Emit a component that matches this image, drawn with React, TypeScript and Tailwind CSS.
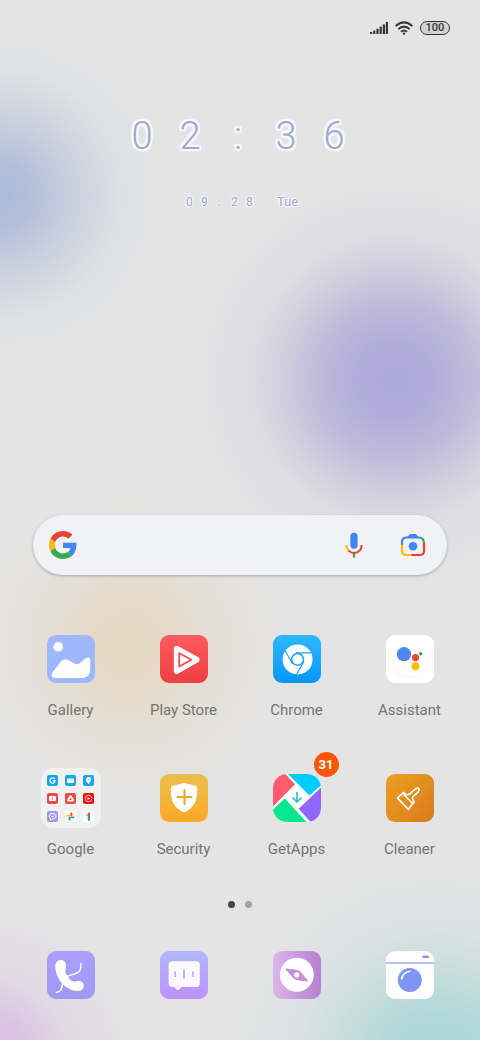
import type { ReactNode } from "react";
import clsx from "clsx";

type AppItem = {
  name: string;
  icon: ReactNode;
  badge?: number;
};

const Tile = ({ className, children }: { className: string; children: ReactNode }) => (
  <span className={clsx("block size-12 overflow-hidden rounded-[9px]", className)}>
    <svg viewBox="0 0 48 48" className="size-full" aria-hidden="true">
      {children}
    </svg>
  </span>
);

const GalleryIcon = () => (
  <Tile className="bg-[#9fb8fd]">
    <circle cx="11.2" cy="11.8" r="4.8" fill="#fff" />
    <path
      d="M5.5 37.500L13.500 27Q17 23 21 25L27.500 28.600Q30 30 32.500 28.200L38.500 23.500Q43.300 20.500 43.300 26V34Q43.300 43 34 43H8Q2.800 42.500 5.500 37.500Z"
      fill="#fff"
    />
  </Tile>
);

const PlayIcon = () => (
  <Tile className="bg-linear-to-b from-[#fd5b5e] to-[#ee3f43]">
    <path d="M16.800 14L36.500 24.700L16.800 36Z" fill="#fff" stroke="#fff" strokeWidth="6" strokeLinejoin="round" />
    <path d="M19.200 18.200L31.500 24.800L19.200 31.500Z" fill="#fff" stroke="#f34a4e" strokeWidth="1.8" strokeLinejoin="round" />
  </Tile>
);

const ChromeIcon = () => (
  <Tile className="bg-linear-to-b from-[#2cb8fd] to-[#0496fb]">
    <circle cx="24.600" cy="24.400" r="15" fill="#fff" />
    <g fill="none" stroke="#189ffb" strokeWidth="1.200">
      <circle cx="24.600" cy="24.400" r="5.900" strokeWidth="1.500" />
      <path d="M23 17.900H38" />
      <path d="M23 17.900H38" transform="rotate(120 24.600 24.400)" />
      <path d="M23 17.900H38" transform="rotate(240 24.600 24.400)" />
    </g>
  </Tile>
);

const AssistantIcon = () => (
  <Tile className="bg-white">
    <path d="M6 28A18.500 18.500 0 0 0 42 28" fill="none" stroke="#f3f3f3" strokeWidth="1" />
    <circle cx="18" cy="19.200" r="7.100" fill="#4c86f0" />
    <circle cx="29.500" cy="22.600" r="3.600" fill="#ea4639" />
    <circle cx="29.500" cy="31.200" r="4" fill="#fbbb08" />
    <circle cx="34.700" cy="18.700" r="1.800" fill="#36a754" />
  </Tile>
);

const SecurityIcon = () => (
  <Tile className="bg-linear-to-b from-[#e9bf4e] to-[#fda823]">
    <path
      d="M24 9C27 9.200 31 11 35.500 11.800Q37.300 12.300 37.300 14.500C37.600 26 34.500 33 26 37.500Q24 38.500 22 37.500C13.500 33 10.600 26 10.900 14.500Q10.900 12.300 12.700 11.800C17 11 21 9.200 24 9Z"
      fill="#fff"
    />
    <path d="M24.500 16V30M17.500 23H31.500" stroke="#eda92f" strokeWidth="2.200" strokeLinecap="round" />
  </Tile>
);

const GetAppsIcon = () => (
  <span className="block size-12 overflow-hidden rounded-[14px] bg-white">
    <svg viewBox="0 0 48 48" className="size-full" aria-hidden="true">
      <path d="M0 0H12.300L22 10.300L0 32.500Z" fill="#fe5c6c" />
      <path d="M15 0H48V11.500L36.300 21.500Z" fill="#00cbfd" />
      <path d="M48 13.500V48H37.500L25.700 34.800Z" fill="#9166fe" />
      <path d="M0 35.500L11.800 24.500L33.500 48H0Z" fill="#06e68c" />
      <path d="M24 18V27.500" stroke="#1cb6c9" strokeWidth="1.500" />
      <path d="M19.500 23.500L24 28L28.500 23.500" fill="none" stroke="#16c4b4" strokeWidth="1.500" />
    </svg>
  </span>
);

const CleanerIcon = () => (
  <Tile className="bg-linear-to-br from-[#eca022] to-[#d97b1c]">
    <g fill="none" stroke="#fff" strokeWidth="1.700" strokeLinejoin="round" strokeLinecap="round">
      <path d="M11.500 24.200L17.300 18.500L20 20.500Q22 21.300 24 19.700L29.800 14.700Q32 13.600 33 15Q33.700 16.300 32.300 17.800L27 22.600Q25.800 24.300 27.300 26.500L28 28L22.300 35.300Z" />
      <path d="M16.700 19.500L26.700 29.500" />
    </g>
  </Tile>
);

const PhoneIcon = () => (
  <Tile className="bg-linear-to-b from-[#aaa0fb] to-[#a296f9]">
    <path
      d="M8.300 16C8 11.500 11 8.500 14.500 9C18.500 9.700 19.700 13.500 18.700 17C17.700 20 18.300 22.500 20.500 25.500C23 29 25.500 31.300 28.500 30.500C33 29 36.800 31.300 36.800 34.700C36.800 38.500 33 40.500 29 40C17 38.300 8.800 27 8.300 16Z"
      fill="#fff"
    />
    <path d="M34 12.500C34.500 24 28 22 20 25.500" fill="none" stroke="#fff" strokeWidth="1.400" strokeLinecap="round" />
    <path d="M15.500 30C15.800 36 14 41 9.300 41.500" fill="none" stroke="#fff" strokeWidth="1.400" strokeLinecap="round" />
  </Tile>
);

const MessagesIcon = () => (
  <Tile className="bg-linear-to-b from-[#b0b8fb] to-[#bc90fb]">
    <path
      d="M12.500 10.300H36Q39.800 10.300 39.800 14V32.300Q39.800 36 36 36H21.500L18.800 38.600Q17.700 39.600 16.600 38.600L14.500 36H12.500Q8.600 36 8.600 32.300V14Q8.600 10.300 12.500 10.300Z"
      fill="#fbf8ff"
    />
    <g strokeWidth="1.500">
      <path d="M15.200 20.500V26M33 20.500V26" stroke="#b7a4f8" />
      <path d="M24 18.200V28" stroke="#b9a0f8" />
    </g>
  </Tile>
);

const BrowserIcon = () => (
  <Tile className="bg-linear-to-r from-[#dcb5ea] to-[#b680d0]">
    <circle cx="23.800" cy="23.800" r="17" fill="#fff" />
    <path d="M12.700 18Q20 18.200 26.500 20.200L34.800 30Q27 29.800 21.200 27.600Z" fill="#c391db" stroke="#c391db" strokeLinejoin="round" />
    <circle cx="23.800" cy="23.900" r="2.600" fill="#fff" />
  </Tile>
);

const CameraIcon = () => (
  <Tile className="bg-white">
    <path d="M0 12H48" stroke="#a0aafc" strokeWidth="1.500" />
    <ellipse cx="39.700" cy="5.700" rx="3.700" ry="1.300" fill="#7f92f4" />
    <circle cx="23.800" cy="29" r="12" fill="#7f95f6" />
    <path d="M15.500 28Q17 21.500 24 20.300" fill="none" stroke="#fff" strokeWidth="1.500" strokeLinecap="round" />
  </Tile>
);

const Mini = ({ className, children }: { className: string; children: ReactNode }) => (
  <svg viewBox="0 0 11 11" className={clsx("size-[11px] rounded-[2px]", className)} aria-hidden="true">
    {children}
  </svg>
);

const FolderIcon = () => (
  <span className="grid size-[60px] grid-cols-3 place-content-center justify-items-center gap-[7px] rounded-[12px] bg-[#f1f1f0] px-[6px]">
    <Mini className="bg-[#18a5f4]">
      <path d="M7.500 3.800A2.600 2.600 0 1 0 8.100 5.700H5.800" fill="none" stroke="#fff" strokeWidth="1.200" />
    </Mini>
    <Mini className="bg-[#18a5f4]">
      <path d="M2 3.500H9V7Q9 8 8 8H3Q2 8 2 7Z" fill="#fff" />
      <path d="M2 3.700L5.500 5.400L9 3.700" fill="none" stroke="#8fd3fa" strokeWidth="0.600" />
    </Mini>
    <Mini className="bg-[#18a5f4]">
      <path d="M5.500 9.200Q2.900 6 2.900 4.500A2.600 2.600 0 0 1 8.100 4.500Q8.100 6 5.500 9.200Z" fill="#fff" />
      <circle cx="5.500" cy="4.500" r="0.800" fill="#7cc9f7" />
    </Mini>
    <Mini className="bg-[#f2484c]">
      <rect x="2" y="3" width="7" height="5" rx="1.300" fill="#fff" />
      <path d="M4.800 4.300L6.700 5.500L4.800 6.700Z" fill="#f2484c" />
    </Mini>
    <Mini className="bg-[#f2484c]">
      <path d="M4.600 2.500H6.400L9 7L8.200 8.500H2.800L2 7Z" fill="#fff" />
      <path d="M5.500 4.700L6.800 6.900H4.200Z" fill="#f2484c" />
    </Mini>
    <Mini className="bg-[#ee0d12]">
      <circle cx="5.500" cy="5.500" r="3.300" fill="none" stroke="#fff" strokeWidth="0.700" />
      <path d="M4.500 3.900L7.200 5.500L4.500 7.100Z" fill="#fff" />
    </Mini>
    <Mini className="bg-[#a596f4]">
      <path d="M5.500 2.500C8 2.500 8.800 3.800 8.800 5.300S8 8 5.500 8L3.500 9V7.500Q2.200 6.800 2.200 5.300C2.200 3.800 3 2.500 5.500 2.500Z" fill="none" stroke="#fff" />
      <path d="M4.200 5.300H6.800" stroke="#fff" />
    </Mini>
    <Mini className="bg-white">
      <path d="M5.500 5.500V1.300A2.100 2.100 0 0 1 5.500 5.500" fill="#ea4335" />
      <path d="M5.500 5.500H9.700A2.100 2.100 0 0 1 5.500 5.500" fill="#4285f4" />
      <path d="M5.500 5.500V9.700A2.100 2.100 0 0 1 5.500 5.500" fill="#34a853" />
      <path d="M5.500 5.500H1.300A2.100 2.100 0 0 1 5.500 5.500" fill="#fbbc04" />
    </Mini>
    <Mini className="bg-white">
      <path d="M3 3.800L5 2.200V4.600L3 5.500Z" fill="#fbbc04" />
      <path d="M4.800 2.300L7 1.300V4H4.800Z" fill="#ea4335" />
      <path d="M4.800 3.600H7V7.500H4.800Z" fill="#4285f4" />
      <path d="M4.800 7.300H7V9.700H4.800Z" fill="#34a853" />
    </Mini>
  </span>
);

const apps: AppItem[] = [
  { name: "Gallery", icon: <GalleryIcon /> },
  { name: "Play Store", icon: <PlayIcon /> },
  { name: "Chrome", icon: <ChromeIcon /> },
  { name: "Assistant", icon: <AssistantIcon /> },
  { name: "Google", icon: <FolderIcon /> },
  { name: "Security", icon: <SecurityIcon /> },
  { name: "GetApps", icon: <GetAppsIcon />, badge: 31 },
  { name: "Cleaner", icon: <CleanerIcon /> },
];

const dock: AppItem[] = [
  { name: "Phone", icon: <PhoneIcon /> },
  { name: "Messages", icon: <MessagesIcon /> },
  { name: "Browser", icon: <BrowserIcon /> },
  { name: "Camera", icon: <CameraIcon /> },
];

const StatusBar = () => (
  <header className="flex h-14 items-center justify-end gap-[7px] pr-[30px] text-[#353535]">
    <svg viewBox="0 0 18 12" className="h-3 w-[18px]" fill="currentColor" aria-label="Signal">
      <rect x="0" y="10" width="2.200" height="2" />
      <rect x="3.200" y="8.600" width="2.200" height="3.400" />
      <rect x="6.400" y="6.800" width="2.200" height="5.200" />
      <rect x="9.600" y="4.600" width="2.200" height="7.400" />
      <rect x="12.800" y="2.400" width="2.200" height="9.600" />
      <rect x="15.800" y="0" width="2.200" height="12" />
    </svg>
    <svg viewBox="0 0 18 14" className="h-3.5 w-[18px]" fill="none" stroke="currentColor" strokeWidth="2" aria-label="Wi-Fi">
      <path d="M0.700 5Q9 -2.200 17.300 5" />
      <path d="M3.400 8Q9 3.200 14.600 8" />
      <path d="M6 10.800Q9 8.200 12 10.800" />
      <circle cx="9" cy="12.600" r="1.200" fill="currentColor" stroke="none" />
    </svg>
    <span className="flex h-[14px] w-[30px] items-center justify-center rounded-full border border-[#353535] bg-[#d2d2d2] text-[11px] leading-3 font-medium">
      100
    </span>
  </header>
);

// solid white outline around the pale blue lettering
const bigHalo =
  "[text-shadow:2px_0_1px_#f8f9fb,-2px_0_1px_#f8f9fb,0_2px_1px_#f8f9fb,0_-2px_1px_#f8f9fb,2px_2px_1px_#f8f9fb,-2px_2px_1px_#f8f9fb,2px_-2px_1px_#f8f9fb,-2px_-2px_1px_#f8f9fb]";
const smallHalo = "[text-shadow:1px_1px_1px_#f8f9fb,-1px_1px_1px_#f8f9fb,1px_-1px_1px_#f8f9fb,-1px_-1px_1px_#f8f9fb]";

const Clock = () => (
  <section className="flex flex-col items-center pt-14 text-[#9ba9d3]">
    <time className={clsx("mr-1 grid grid-cols-5 text-center text-[38px] leading-[48px] font-light", bigHalo)}>
      {["0", "2", ":", "3", "6"].map((char, i) => (
        <span key={i} className="w-12">
          {char}
        </span>
      ))}
    </time>
    <div className={clsx("mt-8 flex items-center gap-5 leading-5", smallHalo)}>
      <span className="grid grid-cols-5 text-center text-[12px]">
        {["0", "9", ".", "2", "8"].map((char, i) => (
          <span key={i} className="w-[15px]">
            {char}
          </span>
        ))}
      </span>
      <span className="text-[13px]">Tue</span>
    </div>
  </section>
);

const GoogleLogo = () => (
  <svg viewBox="0 0 48 48" className="size-7 shrink-0" aria-hidden="true">
    <path fill="#ea4335" d="M24 9.500c3.540 0 6.710 1.220 9.210 3.600l6.850-6.850C35.900 2.380 30.470 0 24 0 14.620 0 6.510 5.380 2.560 13.220l7.980 6.190C12.430 13.720 17.740 9.500 24 9.500z" />
    <path fill="#4285f4" d="M46.980 24.550c0-1.570-.15-3.090-.38-4.550H24v9.020h12.940c-.58 2.960-2.260 5.480-4.780 7.180l7.730 6c4.510-4.180 7.090-10.360 7.090-17.650z" />
    <path fill="#fbbc05" d="M10.530 28.590c-.48-1.450-.76-2.990-.76-4.590s.27-3.140.76-4.590l-7.980-6.190C.92 16.460 0 20.120 0 24c0 3.880.92 7.540 2.560 10.780l7.970-6.190z" />
    <path fill="#34a853" d="M24 48c6.480 0 11.930-2.130 15.890-5.810l-7.730-6c-2.150 1.450-4.920 2.300-8.160 2.300-6.260 0-11.570-4.220-13.470-9.910l-7.980 6.190C6.510 42.620 14.620 48 24 48z" />
  </svg>
);

const SearchBar = () => (
  <form
    role="search"
    onSubmit={(e) => e.preventDefault()}
    className="mx-[33px] mt-auto flex h-[60px] items-center rounded-full bg-[#f0f2f5] pr-5 pl-4 shadow-[0_1px_3px_rgba(0,0,0,0.28)]"
  >
    <GoogleLogo />
    <input type="text" aria-label="Search" className="h-full min-w-0 flex-1 bg-transparent px-3 text-base outline-none" />
    <button type="button" aria-label="Voice search">
      <svg viewBox="0 0 28 28" className="size-7" fill="none" strokeWidth="2" aria-hidden="true">
        <rect x="10.400" y="1.700" width="7.200" height="16" rx="3.600" fill="#4285f4" />
        <path d="M6.300 14Q6.400 17.500 8.700 19.800" stroke="#fbbc05" />
        <path d="M8.500 19.600Q10.800 21.900 14 21.900Q21.400 21.500 21.700 14" stroke="#ea4335" />
        <path d="M14 22.500V26.500" stroke="#34a853" strokeWidth="2.300" />
      </svg>
    </button>
    <button type="button" aria-label="Search by image" className="ml-[31px]">
      <svg viewBox="0 0 28 28" className="size-7" fill="none" strokeWidth="2.200" aria-hidden="true">
        <path d="M3 14V11Q3 6.500 7.500 6.500H20" stroke="#4285f4" />
        <path d="M20 6.500Q25 6.500 25 12.500" stroke="#34a853" />
        <path d="M25 12V20Q25 24 21 24H12" stroke="#ea4335" />
        <path d="M12.500 24H7.500Q3 24 3 19.500V13.800" stroke="#fbbc05" />
        <path d="M8.500 6.500L10 4Q10.500 3 11.700 3H16.300Q17.500 3 18 4L19.500 6.500Z" fill="#4285f4" />
        <circle cx="14" cy="15.200" r="4.300" fill="#4285f4" />
      </svg>
    </button>
  </form>
);

const AppButton = ({ app }: { app: AppItem }) => (
  <button type="button" className="flex flex-col items-center">
    <span className="relative flex h-[60px] items-center">
      {app.icon}
      {app.badge && (
        <span className="absolute -top-4 -right-[18px] flex size-[25px] items-center justify-center rounded-full bg-[#fd5603] text-[13px] font-bold text-white">
          {app.badge}
        </span>
      )}
    </span>
    <span className="mt-[11px] text-[15px] leading-5 text-[#747474]">{app.name}</span>
  </button>
);

export default function App() {
  return (
    <main className="flex min-h-screen flex-col overflow-hidden bg-[#e4e4e4] bg-[radial-gradient(circle_at_0%_18.700%,#abbadb_0px,#b3bfdb_32px,#c5cdde_65px,#d6d9e1_100px,rgba(222,224,227,0.700)_125px,transparent_180px),radial-gradient(circle_at_82%_36.500%,#aea7dc_0px,#b3addb_40px,#c0bcdb_80px,#d1cfde_112px,rgba(219,218,226,0.700)_145px,transparent_205px),radial-gradient(circle_at_27%_62%,#e5d7c0_0px,#e5dac8_40px,#e4dfd5_85px,rgba(228,225,220,0.700)_115px,transparent_155px),radial-gradient(circle_at_-3%_102%,#d9b8e3_0px,#dcc4e4_45px,rgba(223,212,228,0.700)_85px,transparent_150px),radial-gradient(circle_at_91%_103%,#a5d6d6_0px,#b0d8d8_55px,#c8dddd_100px,rgba(216,225,225,0.700)_145px,transparent_210px)] font-['Roboto',sans-serif]">
      <StatusBar />
      <Clock />
      <SearchBar />
      <section aria-label="Apps" className="mt-[54px] grid grid-cols-4 gap-y-12 px-[14px]">
        {apps.map((app) => (
          <AppButton key={app.name} app={app} />
        ))}
      </section>
      <div className="mt-[42px] flex justify-center gap-[10px]">
        <button type="button" aria-label="Page 1" className="size-[7px] rounded-full bg-[#444444]" />
        <button type="button" aria-label="Page 2" className="size-[7px] rounded-full bg-[#a0a2a2]" />
      </div>
      <nav aria-label="Dock" className="mt-[43px] grid grid-cols-4 justify-items-center px-[14px] pb-[41px]">
        {dock.map((app) => (
          <button key={app.name} type="button" aria-label={app.name}>
            {app.icon}
          </button>
        ))}
      </nav>
    </main>
  );
}
